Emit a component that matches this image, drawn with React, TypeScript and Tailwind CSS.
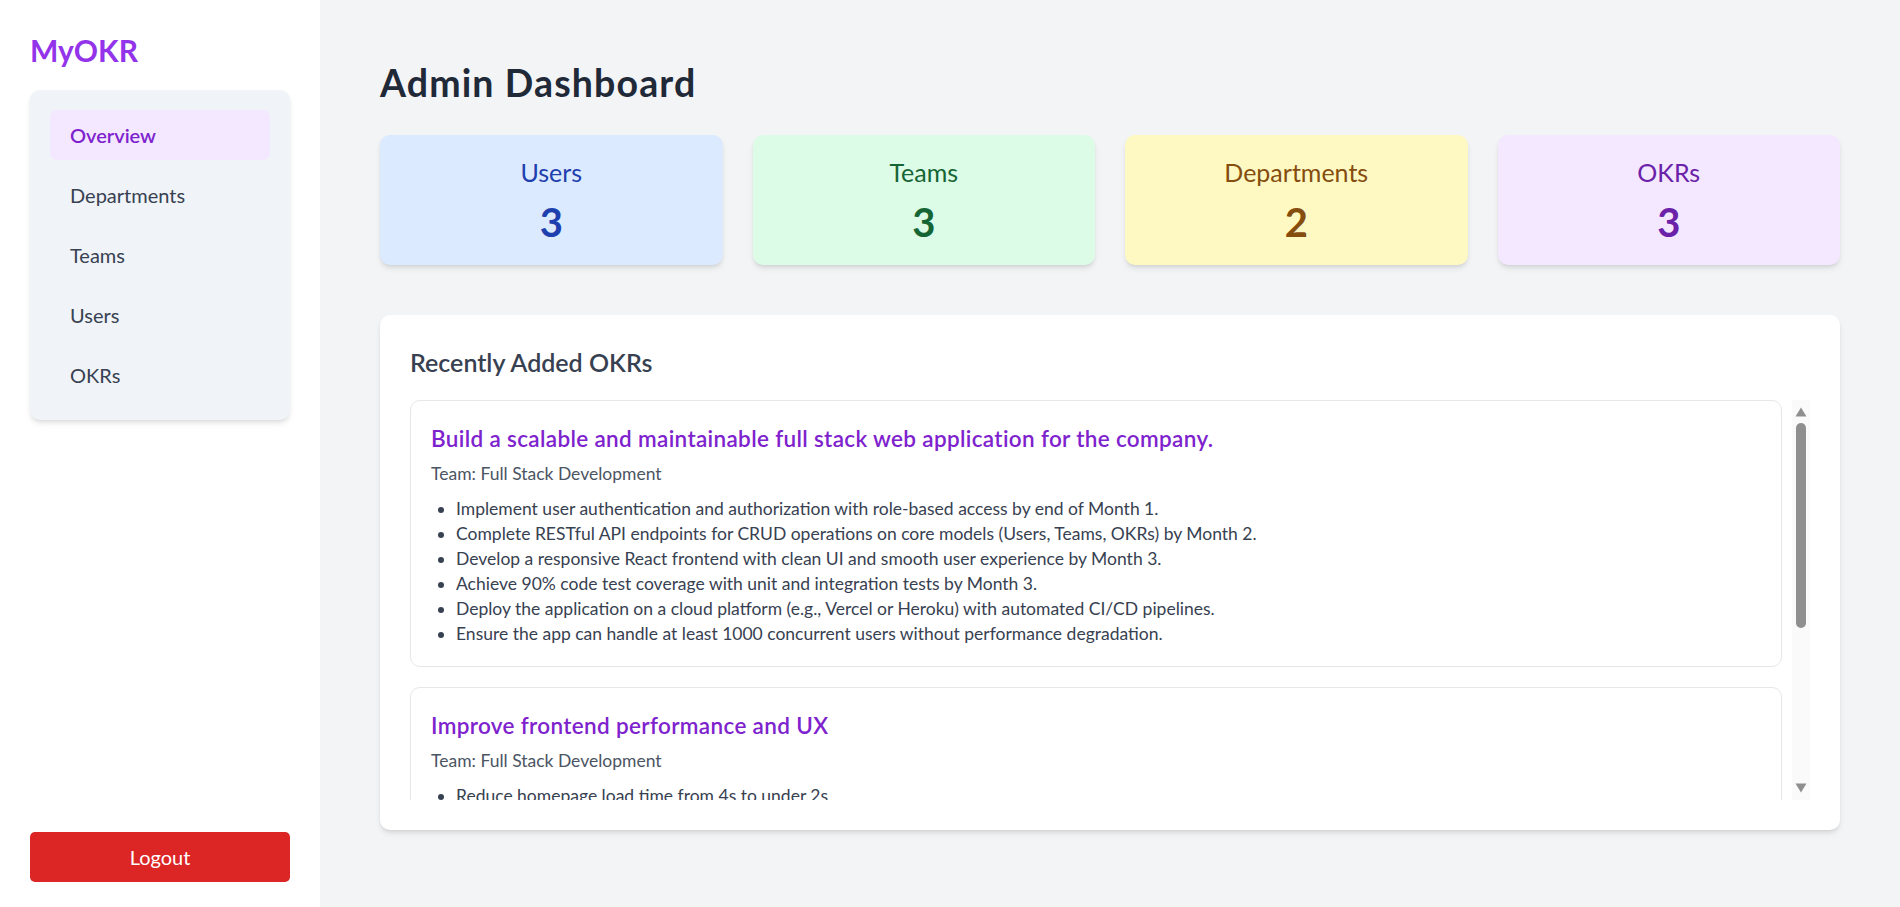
import { useState } from 'react';

type Okr = {
  id: number;
  title: string;
  team: string;
  keyResults: string[];
};

const stats = [
  { label: 'Users', value: 3, box: 'bg-[#dbeafe]', text: 'text-[#1e40af]' },
  { label: 'Teams', value: 3, box: 'bg-[#dcfce7]', text: 'text-[#166534]' },
  { label: 'Departments', value: 2, box: 'bg-[#fef9c3]', text: 'text-[#854d0e]' },
  { label: 'OKRs', value: 3, box: 'bg-[#f3e8ff]', text: 'text-[#6b21a8]' },
];

const okrs: Okr[] = [
  {
    id: 1,
    title: 'Build a scalable and maintainable full stack web application for the company.',
    team: 'Full Stack Development',
    keyResults: [
      'Implement user authentication and authorization with role-based access by end of Month 1.',
      'Complete RESTful API endpoints for CRUD operations on core models (Users, Teams, OKRs) by Month 2.',
      'Develop a responsive React frontend with clean UI and smooth user experience by Month 3.',
      'Achieve 90% code test coverage with unit and integration tests by Month 3.',
      'Deploy the application on a cloud platform (e.g., Vercel or Heroku) with automated CI/CD pipelines.',
      'Ensure the app can handle at least 1000 concurrent users without performance degradation.',
    ],
  },
  {
    id: 2,
    title: 'Improve frontend performance and UX',
    team: 'Full Stack Development',
    keyResults: [
      'Reduce homepage load time from 4s to under 2s',
      'Reach a Lighthouse performance score of 90+ on all main pages',
      'Cut bundle size by 30% through code splitting and lazy loading',
    ],
  },
  {
    id: 3,
    title: 'Strengthen backend reliability',
    team: 'Full Stack Development',
    keyResults: [
      'Keep API uptime above 99.9% for the quarter',
      'Add monitoring and alerting for all critical services',
    ],
  },
];

const navItems = ['Overview', 'Departments', 'Teams', 'Users', 'OKRs'];

// windows-style scrollbar, the list itself hides the native one
function FakeScrollbar() {
  return (
    <div className="w-[18px] bg-[#fafafa] flex flex-col items-center">
      <svg width="14" height="23" viewBox="0 0 14 23" className="shrink-0">
        <path d="M1.5 16.5 L7 7.5 L12.5 16.5 Z" fill="#8f8f8f" />
      </svg>
      <div className="w-[10px] h-[205px] rounded-full bg-[#8f8f8f]" />
      <div className="flex-1" />
      <svg width="14" height="23" viewBox="0 0 14 23" className="shrink-0">
        <path d="M1.5 6.5 L12.5 6.5 L7 15.5 Z" fill="#8f8f8f" />
      </svg>
    </div>
  );
}

export default function App() {
  const [active, setActive] = useState('Overview');

  return (
    <div className="flex h-screen overflow-hidden font-['Lato','Liberation_Sans',sans-serif]">
      <aside className="w-[320px] shrink-0 bg-white flex flex-col justify-between px-[30px] pt-[30px] pb-[25px]">
        <div>
          <h1 className="text-[30px] leading-[40px] font-bold text-[#9333ea] mb-[20px]">MyOKR</h1>
          <nav className="bg-[#f0f3f8] rounded-[10px] shadow-md p-[20px] flex flex-col gap-[10px]">
            {navItems.map((item) => (
              <button
                key={item}
                onClick={() => setActive(item)}
                className={
                  item === active
                    ? 'text-left h-[50px] px-[20px] rounded-[7px] text-[20px] leading-[30px] bg-[#f3e8ff] text-[#7e22ce] font-semibold'
                    : 'text-left h-[50px] px-[20px] rounded-[7px] text-[20px] leading-[30px] text-[#374151]'
                }
              >
                {item}
              </button>
            ))}
          </nav>
        </div>
        <button className="w-full h-[50px] bg-[#dc2626] text-white rounded-[5px] text-[20px]">Logout</button>
      </aside>

      <main className="flex-1 bg-[#f3f4f6] p-[60px] overflow-hidden">
        <h2 className="text-[37.5px] leading-[45px] font-bold tracking-[0.03em] text-[#1f2937] mb-[30px]">
          Admin Dashboard
        </h2>

        <div className="grid grid-cols-4 gap-[30px] mb-[50px]">
          {stats.map((s) => (
            <div key={s.label} className={`${s.box} rounded-[10px] shadow-md p-[20px] text-center`}>
              <p className={`${s.text} text-[25px] leading-[35px]`}>{s.label}</p>
              <p className={`${s.text} text-[40px] leading-[45px] font-bold mt-[10px]`}>{s.value}</p>
            </div>
          ))}
        </div>

        <section className="bg-white rounded-[10px] shadow-md p-[30px]">
          <h3 className="text-[25px] leading-[35px] font-semibold text-[#374151] mb-[20px]">Recently Added OKRs</h3>
          <div className="flex h-[400px]">
            <div className="flex-1 overflow-y-auto [scrollbar-width:none] pr-[10px] flex flex-col gap-[20px]">
              {okrs.map((okr) => (
                <div key={okr.id} className="border border-[#e5e7eb] rounded-[10px] p-[20px] bg-white shrink-0">
                  <h4 className="text-[22.5px] leading-[35px] font-semibold tracking-[0.015em] text-[#7e22ce]">
                    {okr.title}
                  </h4>
                  <p className="text-[17.5px] leading-[25px] text-[#4b5563] mt-[5px]">Team: {okr.team}</p>
                  <ul className="list-disc pl-[25px] mt-[10px] text-[17.5px] leading-[25px] text-[#374151]">
                    {okr.keyResults.map((kr) => (
                      <li key={kr}>{kr}</li>
                    ))}
                  </ul>
                </div>
              ))}
            </div>
            <FakeScrollbar />
          </div>
        </section>
      </main>
    </div>
  );
}
